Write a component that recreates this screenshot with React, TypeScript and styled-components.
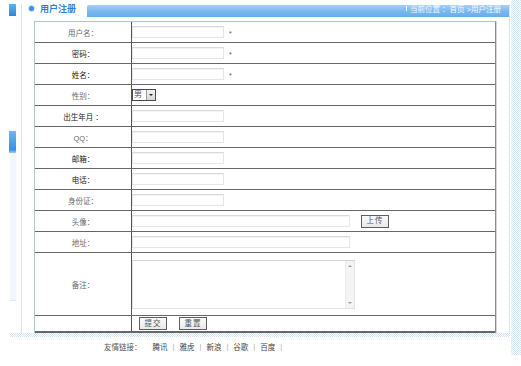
import React from 'react';
import styled, { createGlobalStyle } from 'styled-components';

const GlobalStyle = createGlobalStyle`
  html, body {
    margin: 0;
    padding: 0;
    background: #fff;
  }
  body {
    font-family: "Liberation Sans", "Noto Sans CJK SC", sans-serif;
    font-size: 7.5px;
    color: #444;
  }
  * {
    box-sizing: border-box;
  }
`;

const dots = 'repeating-conic-gradient(#d3e4f6 0 25%, #ffffff 0 50%) 0 0 / 2px 2px';

const Page = styled.div`
  display: flex;
  width: 521px;
  height: 366px;
  overflow: hidden;
`;

const Left = styled.div`
  width: 510px;
  display: flex;
  flex-direction: column;
`;

const Upper = styled.div`
  display: flex;
  height: 333px;
`;

const SideNav = styled.nav`
  width: 21px;
  padding: 4px 5px 0 9px;
  display: flex;
  flex-direction: column;
`;

const NavCap = styled.div`
  height: 12px;
  background: linear-gradient(#63b3ef, #2f86d8);
`;

const NavTab = styled.div`
  margin-top: 115px;
  height: 22px;
  background: linear-gradient(#6bb8f1, #3a8fdc 85%, #9fcdf3);
`;

const NavPanel = styled.div`
  height: 148px;
  margin-left: 1px;
  background: #f2f7fd;
  border-bottom: 1px solid #dce8f5;
`;

const Main = styled.main`
  width: 489px;
  margin-top: 4px;
  border-left: 1px solid #d8e6f3;
  border-right: 1px solid #d8e6f3;
  display: flex;
  flex-direction: column;
`;

const Header = styled.header`
  display: flex;
  height: 13px;
`;

const TitleTab = styled.div`
  width: 65px;
  display: flex;
  align-items: flex-start;
  gap: 6px;
  padding: 1px 0 0 7px;
`;

const Bullet = styled.span`
  width: 5px;
  height: 5px;
  margin-top: 1px;
  border-radius: 50%;
  background: #3d8fe0;
  box-shadow: 0 0 0 1px #cfe4f8;
`;

const Title = styled.h1`
  margin: 0;
  font-size: 9px;
  line-height: 8px;
  font-weight: bold;
  color: #2f7fd3;
`;

const Bar = styled.div`
  flex: 1;
  margin-top: 1px;
  border-top-left-radius: 2px;
  background: linear-gradient(#a6d0f5, #78b7ee 55%, #68adea);
  display: flex;
  align-items: flex-start;
  padding: 0 0 0 319px;
  overflow: hidden;
  white-space: nowrap;
  color: #f4f9ff;
  font-size: 7.5px;
  line-height: 9px;
`;

const Marker = styled.span`
  width: 1px;
  height: 5px;
  margin: 1px 3px 0 0;
  background: #fff;
  flex-shrink: 0;
`;

const FormTable = styled.form`
  margin: 4px 0 0 12px;
  width: 462px;
  border-left: 1px solid #a7cbbc;
  border-top: 1px solid #a7cbbc;
  border-right: 1px solid #8d8d8d;
  box-shadow: 1px 0 0 #d6d6d6;
  display: flex;
  flex-direction: column;
`;

const Row = styled.div<{ $h?: number; $last?: boolean }>`
  display: grid;
  grid-template-columns: 97px 1fr;
  height: ${(p) => p.$h ?? 21}px;
  border-bottom: ${(p) => (p.$last ? 2 : 1)}px solid #676767;
`;

const Label = styled.label<{ $dark?: boolean }>`
  border-right: 1px solid #555;
  display: flex;
  align-items: center;
  justify-content: center;
  color: ${(p) => (p.$dark ? '#222' : '#6a6a6a')};
  white-space: nowrap;
`;

const Cell = styled.div<{ $pad?: number }>`
  display: flex;
  align-items: center;
  gap: 5px;
  padding-left: ${(p) => p.$pad ?? 0}px;
`;

const TextInput = styled.input<{ $wide?: boolean }>`
  width: ${(p) => (p.$wide ? 218 : 92)}px;
  height: 12px;
  margin: 0;
  padding: 0 2px;
  border: 1px solid #e6e6e6;
  border-top-color: #dadada;
  box-shadow: inset 0 1px 0 #f3f3f3;
  background: #fff;
  font: inherit;
  outline: none;
`;

const Star = styled.span`
  color: #555;
  font-size: 7px;
  margin-top: 2px;
`;

const SelectBox = styled.span`
  display: inline-flex;
  height: 12px;
  width: 24px;
  border: 1px solid #4a4a4a;
  background: #fff;
`;

const SelectText = styled.span`
  flex: 1;
  font-size: 8px;
  line-height: 10px;
  padding-left: 1px;
  color: #555;
`;

const SelectArrow = styled.span`
  width: 9px;
  background: linear-gradient(#f2f2f2, #d6d6d6);
  border-left: 1px solid #9a9a9a;
  display: flex;
  align-items: center;
  justify-content: center;
  &::after {
    content: '';
    border-left: 2px solid transparent;
    border-right: 2px solid transparent;
    border-top: 2px solid #222;
  }
`;

const Button = styled.button<{ $w?: number }>`
  width: ${(p) => p.$w ?? 28}px;
  height: 13px;
  margin: 0;
  padding: 0;
  border: 1px solid #5e5e5e;
  background: linear-gradient(#fafafa, #e9e9e9);
  color: #555;
  font: inherit;
  line-height: 10px;
  letter-spacing: 1px;
`;

const UploadButton = styled(Button)`
  margin-left: 6px;
`;

const AreaBox = styled.div`
  width: 223px;
  height: 49px;
  display: flex;
  border: 1px solid #e2e2e2;
  border-top-color: #d2d2d2;
`;

const Area = styled.textarea`
  flex: 1;
  margin: 0;
  border: none;
  resize: none;
  outline: none;
  font: inherit;
`;

const ScrollTrack = styled.div`
  width: 9px;
  background: #f4f3f5;
  border-left: 1px solid #ececec;
  display: flex;
  flex-direction: column;
  justify-content: space-between;
  align-items: center;
  padding: 4px 0;
`;

const Arrow = styled.span<{ $down?: boolean }>`
  border-left: 2px solid transparent;
  border-right: 2px solid transparent;
  ${(p) => (p.$down ? 'border-top' : 'border-bottom')}: 2px solid #9a9a9a;
`;

const Actions = styled(Cell)`
  gap: 12px;
`;

const BottomStrip = styled.div`
  height: 4px;
  margin-left: 10px;
  background: ${dots};
`;

const Footer = styled.footer`
  display: flex;
  align-items: center;
  gap: 5px;
  padding: 4px 0 0 104px;
  color: #555;
  white-space: nowrap;
`;

const FooterTitle = styled.span`
  margin-right: 6px;
`;

const FooterLink = styled.a`
  color: #444;
  text-decoration: none;
`;

const Sep = styled.span`
  color: #aaa;
`;

const RightStrip = styled.div`
  width: 11px;
  height: 355px;
  border-left: 1px solid #fff;
  background: ${dots};
`;

type Field = { label: string; dark?: boolean; required?: boolean; wide?: boolean };

const topFields: Field[] = [
  { label: '用户名：', required: true },
  { label: '密码：', dark: true, required: true },
  { label: '姓名：', dark: true, required: true },
];

const midFields: Field[] = [
  { label: '出生年月 ：', dark: true },
  { label: 'QQ：' },
  { label: '邮箱：', dark: true },
  { label: '电话：', dark: true },
  { label: '身份证：' },
];

const links = ['腾讯', '雅虎', '新浪', '谷歌', '百度'];

const FieldRow = ({ field }: { field: Field }) => (
  <Row>
    <Label $dark={field.dark}>{field.label}</Label>
    <Cell>
      <TextInput $wide={field.wide} type={field.label.startsWith('密') ? 'password' : 'text'} />
      {field.required && <Star>*</Star>}
    </Cell>
  </Row>
);

const App = () => {
  return (
    <>
      <GlobalStyle />
      <Page>
        <Left>
          <Upper>
            <SideNav>
              <NavCap />
              <NavTab />
              <NavPanel />
            </SideNav>
            <Main>
              <Header>
                <TitleTab>
                  <Bullet />
                  <Title>用户注册</Title>
                </TitleTab>
                <Bar>
                  <Marker />
                  当前位置 ：首页 &gt;用户注册
                </Bar>
              </Header>
              <FormTable onSubmit={(e) => e.preventDefault()}>
                {topFields.map((f) => (
                  <FieldRow key={f.label} field={f} />
                ))}
                <Row>
                  <Label>性别：</Label>
                  <Cell>
                    <SelectBox>
                      <SelectText>男</SelectText>
                      <SelectArrow />
                    </SelectBox>
                  </Cell>
                </Row>
                {midFields.map((f) => (
                  <FieldRow key={f.label} field={f} />
                ))}
                <Row>
                  <Label>头像：</Label>
                  <Cell>
                    <TextInput $wide />
                    <UploadButton type="button">上传</UploadButton>
                  </Cell>
                </Row>
                <Row>
                  <Label>地址：</Label>
                  <Cell>
                    <TextInput $wide />
                  </Cell>
                </Row>
                <Row $h={63}>
                  <Label>备注：</Label>
                  <Cell>
                    <AreaBox>
                      <Area />
                      <ScrollTrack>
                        <Arrow />
                        <Arrow $down />
                      </ScrollTrack>
                    </AreaBox>
                  </Cell>
                </Row>
                <Row $h={17} $last>
                  <Label as="div" />
                  <Actions $pad={7}>
                    <Button type="submit">提交</Button>
                    <Button type="reset">重置</Button>
                  </Actions>
                </Row>
              </FormTable>
            </Main>
          </Upper>
          <BottomStrip />
          <Footer>
            <FooterTitle>友情链接：</FooterTitle>
            {links.map((l) => (
              <React.Fragment key={l}>
                <FooterLink href="#">{l}</FooterLink>
                <Sep>|</Sep>
              </React.Fragment>
            ))}
          </Footer>
        </Left>
        <RightStrip />
      </Page>
    </>
  );
};

export default App;
